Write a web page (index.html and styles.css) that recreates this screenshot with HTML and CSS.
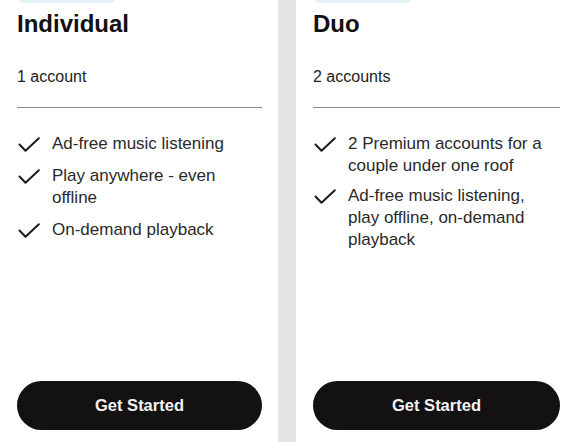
FILE: index.html
```html
<!DOCTYPE html>
<html>
<head>
<meta charset="utf-8">
<link rel="stylesheet" href="styles.css">
</head>
<body>
<div class="plans">
  <section class="card">
    <div class="badge"></div>
    <h2 class="title">Individual</h2>
    <p class="accounts">1 account</p>
    <hr class="divider">
    <ul class="features features-loose">
      <li><svg class="check" viewBox="0 0 22 16"><path d="M1.5 7.5 L7.5 13.8 L20.8 1.2"/></svg><span>Ad-free music listening</span></li>
      <li><svg class="check" viewBox="0 0 22 16"><path d="M1.5 7.5 L7.5 13.8 L20.8 1.2"/></svg><span>Play anywhere - even offline</span></li>
      <li><svg class="check" viewBox="0 0 22 16"><path d="M1.5 7.5 L7.5 13.8 L20.8 1.2"/></svg><span>On-demand playback</span></li>
    </ul>
    <button class="cta">Get Started</button>
  </section>
  <section class="card">
    <div class="badge"></div>
    <h2 class="title">Duo</h2>
    <p class="accounts">2 accounts</p>
    <hr class="divider">
    <ul class="features">
      <li><svg class="check" viewBox="0 0 22 16"><path d="M1.5 7.5 L7.5 13.8 L20.8 1.2"/></svg><span>2 Premium accounts for a couple under one roof</span></li>
      <li><svg class="check" viewBox="0 0 22 16"><path d="M1.5 7.5 L7.5 13.8 L20.8 1.2"/></svg><span>Ad-free music listening, play offline, on-demand playback</span></li>
    </ul>
    <button class="cta">Get Started</button>
  </section>
</div>
</body>
</html>
```

FILE: styles.css
```css
* { box-sizing: border-box; }
html, body {
  margin: 0;
  padding: 0;
  background: #e4e4e4;
  font-family: "Liberation Sans", Arial, sans-serif;
}
.plans {
  display: grid;
  grid-template-columns: 278px 1fr;
  column-gap: 18px;
  height: 442px;
}
.card {
  background: #fff;
  display: flex;
  flex-direction: column;
  padding: 0 16px 12px 17px;
}
.badge {
  width: 95px;
  height: 3px;
  margin-left: 3px;
  background: #e2f3f3;
  border-radius: 0 0 3px 3px;
}
.title {
  margin: 6px 0 0;
  font-size: 24px;
  line-height: 30px;
  font-weight: 700;
  color: #111;
}
.accounts {
  margin: 28px 0 0;
  font-size: 16px;
  line-height: 20px;
  color: #222;
}
.divider {
  margin: 20px 0 0;
  border: 0;
  height: 1px;
  background: #8c8c8c;
}
.features {
  list-style: none;
  margin: 25px 0 0 1px;
  padding: 0 3px 0 0;
  display: flex;
  flex-direction: column;
  gap: 8px;
}
.features-loose {
  gap: 10px;
}
.features li {
  display: flex;
  gap: 12px;
  font-size: 17px;
  line-height: 22px;
  color: #2a2a2a;
}
.check {
  flex: 0 0 22px;
  width: 22px;
  height: 16px;
  margin-top: 4px;
  fill: none;
  stroke: #1c1c1c;
  stroke-width: 2;
  stroke-linecap: round;
  stroke-linejoin: round;
}
.cta {
  margin-top: auto;
  height: 49px;
  border: 0;
  border-radius: 25px;
  background: #131111;
  color: #f2f2f2;
  font-family: "Liberation Sans", Arial, sans-serif;
  font-size: 16.5px;
  font-weight: 700;
}
```
